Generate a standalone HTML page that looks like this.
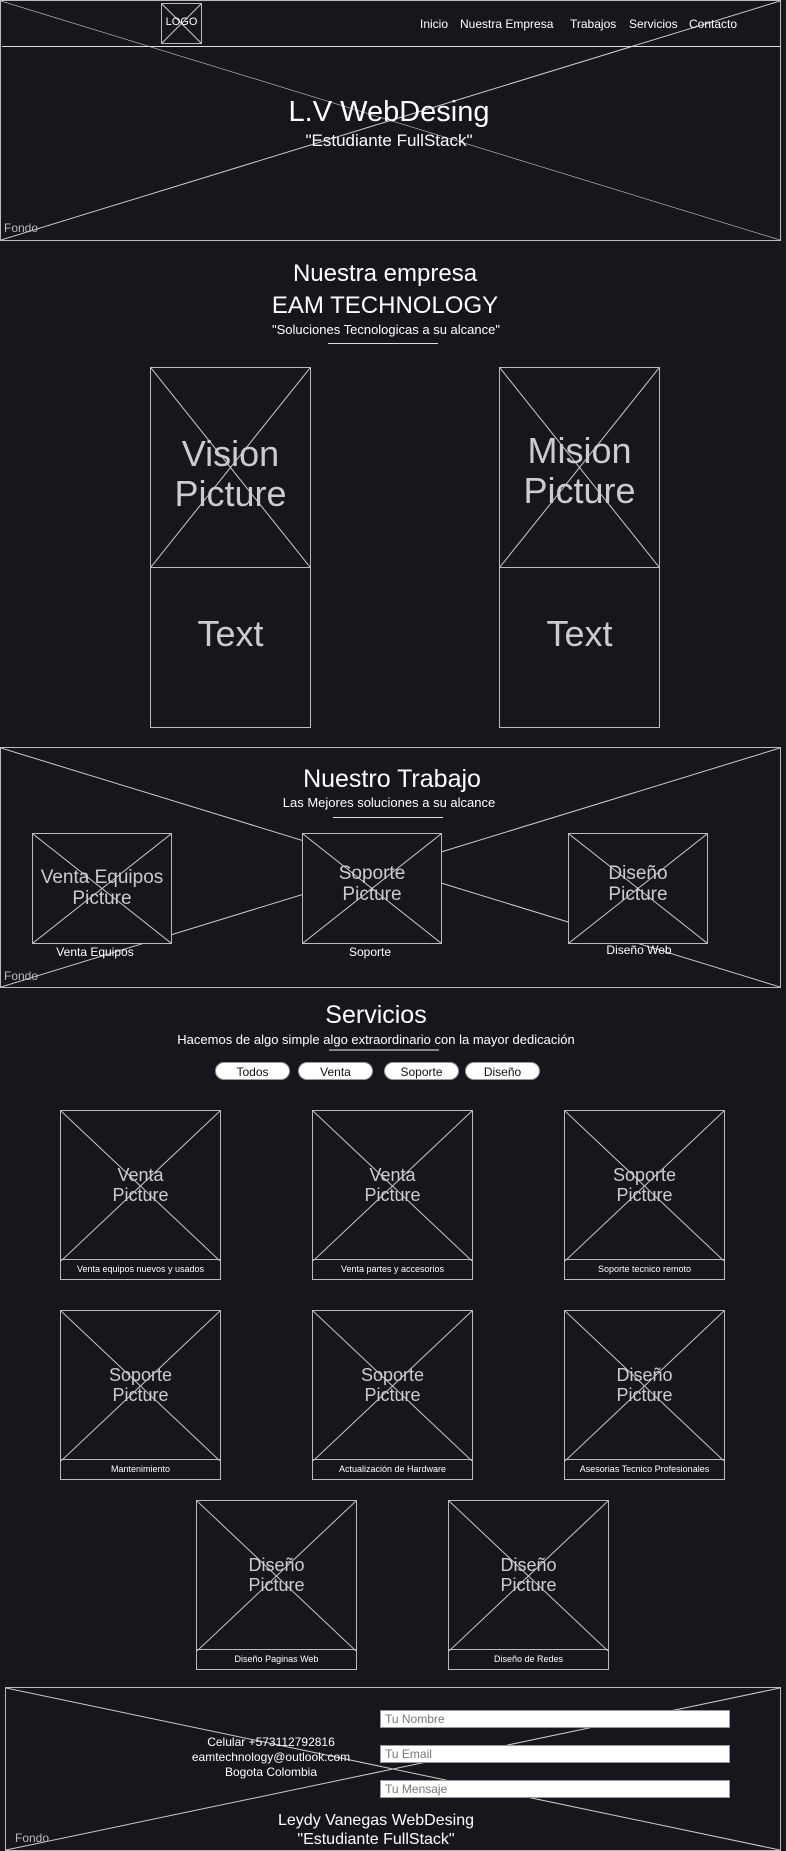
<!DOCTYPE html>
<html><head><meta charset="utf-8"><style>
*{margin:0;padding:0;box-sizing:border-box}
body{width:786px;height:1851px;background:#18151d;position:relative;overflow:hidden;font-family:"Liberation Sans",sans-serif;color:#fff}
.a{position:absolute}
.box{position:absolute;border:1px solid #bbb}
.box svg{position:absolute;left:0;top:0;width:100%;height:100%}
.c{position:absolute;text-align:center;white-space:nowrap;transform:translateX(-50%)}
.pt{position:absolute;left:0;right:0;text-align:center;color:#ccc;line-height:1.1}
.lab{position:absolute;left:0;right:0;bottom:0;border-top:1px solid #bbb;text-align:center;font-size:9px;line-height:19px;color:#fff}
.btn{position:absolute;top:1062px;height:18px;background:#fff;border-radius:9px;color:#111;font-size:12px;text-align:center;line-height:18px;border:1px solid #999}
.in{position:absolute;left:380px;width:350px;height:18px;background:#fff;border:1px solid #999;color:#777;font-size:12px;line-height:16px;padding-left:4px}
</style></head><body>
<!-- hero -->
<div class="box" style="left:0;top:0;width:781px;height:241px"><svg viewBox="0 0 100 100" preserveAspectRatio="none"><line x1="0" y1="0" x2="100" y2="100" stroke="#ccc" stroke-width=".6" vector-effect="non-scaling-stroke"/><line x1="100" y1="0" x2="0" y2="100" stroke="#ccc" vector-effect="non-scaling-stroke"/></svg></div>
<div class="a" style="left:2px;top:46px;width:778px;border-top:1px solid #ddd"></div>
<div class="box" style="left:161px;top:3px;width:41px;height:41px"><svg viewBox="0 0 100 100" preserveAspectRatio="none"><line x1="0" y1="0" x2="100" y2="100" stroke="#ccc" vector-effect="non-scaling-stroke"/><line x1="100" y1="0" x2="0" y2="100" stroke="#ccc" vector-effect="non-scaling-stroke"/></svg><div class="pt" style="top:12px;font-size:11px;color:#fff">LOGO</div></div>
<div class="a" style="top:17px;left:420px;font-size:12px">Inicio</div>
<div class="a" style="top:17px;left:460px;font-size:12px">Nuestra Empresa</div>
<div class="a" style="top:17px;left:570px;font-size:12px">Trabajos</div>
<div class="a" style="top:17px;left:629px;font-size:12px">Servicios</div>
<div class="a" style="top:17px;left:689px;font-size:12px">Contacto</div>
<div class="c" style="left:389px;top:96px;font-size:29px">L.V WebDesing</div>
<div class="c" style="left:389px;top:131px;font-size:17px">"Estudiante FullStack"</div>
<div class="a" style="left:4px;top:221px;font-size:12px;color:#bbb">Fondo</div>
<!-- empresa -->
<div class="c" style="left:385px;top:260px;font-size:24px">Nuestra empresa</div>
<div class="c" style="left:385px;top:292px;font-size:24px">EAM TECHNOLOGY</div>
<div class="c" style="left:386px;top:322px;font-size:13px">"Soluciones Tecnologicas a su alcance"</div>
<div class="a" style="left:328px;top:343px;width:110px;border-top:1px solid #ddd"></div>
<div class="box" style="left:150px;top:367px;width:161px;height:361px"></div>
<div class="box" style="left:150px;top:367px;width:161px;height:201px"><svg viewBox="0 0 100 100" preserveAspectRatio="none"><line x1="0" y1="0" x2="100" y2="100" stroke="#ccc" vector-effect="non-scaling-stroke"/><line x1="100" y1="0" x2="0" y2="100" stroke="#ccc" vector-effect="non-scaling-stroke"/></svg><div class="pt" style="top:66px;font-size:36px">Vision<br>Picture</div></div>
<div class="pt" style="left:150px;width:161px;top:614px;font-size:36px;right:auto">Text</div>
<div class="box" style="left:499px;top:367px;width:161px;height:361px"></div>
<div class="box" style="left:499px;top:367px;width:161px;height:201px"><svg viewBox="0 0 100 100" preserveAspectRatio="none"><line x1="0" y1="0" x2="100" y2="100" stroke="#ccc" vector-effect="non-scaling-stroke"/><line x1="100" y1="0" x2="0" y2="100" stroke="#ccc" vector-effect="non-scaling-stroke"/></svg><div class="pt" style="top:63px;font-size:36px">Mision<br>Picture</div></div>
<div class="pt" style="left:499px;width:161px;top:614px;font-size:36px;right:auto">Text</div>
<!-- trabajo -->
<div class="box" style="left:0;top:747px;width:781px;height:241px"><svg viewBox="0 0 100 100" preserveAspectRatio="none"><line x1="0" y1="0" x2="100" y2="100" stroke="#ccc" vector-effect="non-scaling-stroke"/><line x1="100" y1="0" x2="0" y2="100" stroke="#ccc" vector-effect="non-scaling-stroke"/></svg></div>
<div class="c" style="left:392px;top:765px;font-size:25px">Nuestro Trabajo</div>
<div class="c" style="left:389px;top:795px;font-size:13px">Las Mejores soluciones a su alcance</div>
<div class="a" style="left:333px;top:817px;width:110px;border-top:1px solid #ddd"></div>
<div class="box" style="left:32px;top:833px;width:140px;height:111px;background:#18151d"><svg viewBox="0 0 100 100" preserveAspectRatio="none"><line x1="0" y1="0" x2="100" y2="100" stroke="#ccc" vector-effect="non-scaling-stroke"/><line x1="100" y1="0" x2="0" y2="100" stroke="#ccc" vector-effect="non-scaling-stroke"/></svg><div class="pt" style="top:34px;font-size:19px">Venta Equipos<br>Picture</div></div>
<div class="box" style="left:302px;top:833px;width:140px;height:111px;background:#18151d"><svg viewBox="0 0 100 100" preserveAspectRatio="none"><line x1="0" y1="0" x2="100" y2="100" stroke="#ccc" vector-effect="non-scaling-stroke"/><line x1="100" y1="0" x2="0" y2="100" stroke="#ccc" vector-effect="non-scaling-stroke"/></svg><div class="pt" style="top:30px;font-size:19px">Soporte<br>Picture</div></div>
<div class="box" style="left:568px;top:833px;width:140px;height:111px;background:#18151d"><svg viewBox="0 0 100 100" preserveAspectRatio="none"><line x1="0" y1="0" x2="100" y2="100" stroke="#ccc" vector-effect="non-scaling-stroke"/><line x1="100" y1="0" x2="0" y2="100" stroke="#ccc" vector-effect="non-scaling-stroke"/></svg><div class="pt" style="top:30px;font-size:19px">Diseño<br>Picture</div></div>
<div class="c" style="left:95px;top:945px;font-size:12px">Venta Equipos</div>
<div class="c" style="left:370px;top:945px;font-size:12px">Soporte</div>
<div class="c" style="left:639px;top:943px;font-size:12px">Diseño Web</div>
<div class="a" style="left:4px;top:969px;font-size:12px;color:#bbb">Fondo</div>
<!-- servicios -->
<div class="c" style="left:376px;top:1001px;font-size:25px">Servicios</div>
<div class="c" style="left:376px;top:1032px;font-size:13px">Hacemos de algo simple algo extraordinario con la mayor dedicación</div>
<div class="a" style="left:329px;top:1049px;width:110px;border-top:2px solid #888"></div>
<div class="btn" style="left:215px;width:75px">Todos</div>
<div class="btn" style="left:298px;width:75px">Venta</div>
<div class="btn" style="left:384px;width:75px">Soporte</div>
<div class="btn" style="left:465px;width:75px">Diseño</div>

<div id="cards"></div>
<!-- cards -->
<div class="box" style="left:60px;top:1110px;width:161px;height:170px"><svg viewBox="0 0 100 100" preserveAspectRatio="none" style="height:150px"><line x1="0" y1="0" x2="100" y2="100" stroke="#ccc" vector-effect="non-scaling-stroke"/><line x1="100" y1="0" x2="0" y2="100" stroke="#ccc" vector-effect="non-scaling-stroke"/></svg><div class="pt" style="top:55px;font-size:18px">Venta<br>Picture</div><div class="lab">Venta equipos nuevos y usados</div></div>
<div class="box" style="left:312px;top:1110px;width:161px;height:170px"><svg viewBox="0 0 100 100" preserveAspectRatio="none" style="height:150px"><line x1="0" y1="0" x2="100" y2="100" stroke="#ccc" vector-effect="non-scaling-stroke"/><line x1="100" y1="0" x2="0" y2="100" stroke="#ccc" vector-effect="non-scaling-stroke"/></svg><div class="pt" style="top:55px;font-size:18px">Venta<br>Picture</div><div class="lab">Venta partes y accesorios</div></div>
<div class="box" style="left:564px;top:1110px;width:161px;height:170px"><svg viewBox="0 0 100 100" preserveAspectRatio="none" style="height:150px"><line x1="0" y1="0" x2="100" y2="100" stroke="#ccc" vector-effect="non-scaling-stroke"/><line x1="100" y1="0" x2="0" y2="100" stroke="#ccc" vector-effect="non-scaling-stroke"/></svg><div class="pt" style="top:55px;font-size:18px">Soporte<br>Picture</div><div class="lab">Soporte tecnico remoto</div></div>

<div class="box" style="left:60px;top:1310px;width:161px;height:170px"><svg viewBox="0 0 100 100" preserveAspectRatio="none" style="height:150px"><line x1="0" y1="0" x2="100" y2="100" stroke="#ccc" vector-effect="non-scaling-stroke"/><line x1="100" y1="0" x2="0" y2="100" stroke="#ccc" vector-effect="non-scaling-stroke"/></svg><div class="pt" style="top:55px;font-size:18px">Soporte<br>Picture</div><div class="lab">Mantenimiento</div></div>
<div class="box" style="left:312px;top:1310px;width:161px;height:170px"><svg viewBox="0 0 100 100" preserveAspectRatio="none" style="height:150px"><line x1="0" y1="0" x2="100" y2="100" stroke="#ccc" vector-effect="non-scaling-stroke"/><line x1="100" y1="0" x2="0" y2="100" stroke="#ccc" vector-effect="non-scaling-stroke"/></svg><div class="pt" style="top:55px;font-size:18px">Soporte<br>Picture</div><div class="lab">Actualización de Hardware</div></div>
<div class="box" style="left:564px;top:1310px;width:161px;height:170px"><svg viewBox="0 0 100 100" preserveAspectRatio="none" style="height:150px"><line x1="0" y1="0" x2="100" y2="100" stroke="#ccc" vector-effect="non-scaling-stroke"/><line x1="100" y1="0" x2="0" y2="100" stroke="#ccc" vector-effect="non-scaling-stroke"/></svg><div class="pt" style="top:55px;font-size:18px">Diseño<br>Picture</div><div class="lab">Asesorias Tecnico Profesionales</div></div>

<div class="box" style="left:196px;top:1500px;width:161px;height:170px"><svg viewBox="0 0 100 100" preserveAspectRatio="none" style="height:150px"><line x1="0" y1="0" x2="100" y2="100" stroke="#ccc" vector-effect="non-scaling-stroke"/><line x1="100" y1="0" x2="0" y2="100" stroke="#ccc" vector-effect="non-scaling-stroke"/></svg><div class="pt" style="top:55px;font-size:18px">Diseño<br>Picture</div><div class="lab">Diseño Paginas Web</div></div>
<div class="box" style="left:448px;top:1500px;width:161px;height:170px"><svg viewBox="0 0 100 100" preserveAspectRatio="none" style="height:150px"><line x1="0" y1="0" x2="100" y2="100" stroke="#ccc" vector-effect="non-scaling-stroke"/><line x1="100" y1="0" x2="0" y2="100" stroke="#ccc" vector-effect="non-scaling-stroke"/></svg><div class="pt" style="top:55px;font-size:18px">Diseño<br>Picture</div><div class="lab">Diseño de Redes</div></div>
<!-- footer -->
<div class="box" style="left:5px;top:1687px;width:776px;height:164px"><svg viewBox="0 0 100 100" preserveAspectRatio="none"><line x1="0" y1="0" x2="100" y2="100" stroke="#ccc" vector-effect="non-scaling-stroke"/><line x1="100" y1="0" x2="0" y2="100" stroke="#ccc" vector-effect="non-scaling-stroke"/></svg></div>
<div class="in" style="top:1710px">Tu Nombre</div>
<div class="in" style="top:1745px">Tu Email</div>
<div class="in" style="top:1780px">Tu Mensaje</div>
<div class="c" style="left:271px;top:1735px;font-size:12px;line-height:15px">Celular +573112792816<br>eamtechnology@outlook.com<br>Bogota Colombia</div>
<div class="c" style="left:376px;top:1811px;font-size:16px;line-height:19px">Leydy Vanegas WebDesing<br>"Estudiante FullStack"</div>
<div class="a" style="left:15px;top:1831px;font-size:12px;color:#bbb">Fondo</div>
</body></html>
